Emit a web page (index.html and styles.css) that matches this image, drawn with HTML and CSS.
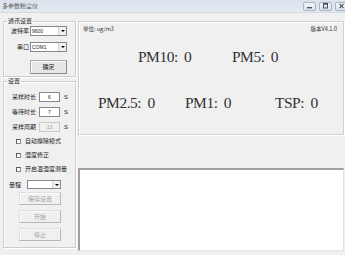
FILE: index.html
```html
<!DOCTYPE html>
<html lang="zh">
<head>
    <meta charset="UTF-8" />
    <title>多参数粉尘仪</title>
    <link rel="stylesheet" href="styles.css">
</head>
<body>
    <div class="window">
        <div class="titlebar">
            <span class="title">多参数粉尘仪</span>
            <div class="win-btns">
                <span class="win-btn">
                    <svg width="7" height="5" viewBox="0 0 7 5"><rect x="1" y="3" width="5" height="1.4" fill="#4a5566"/></svg>
                </span>
                <span class="win-btn">
                    <svg width="7" height="6" viewBox="0 0 7 6"><rect x="1.5" y="0.5" width="4" height="4.5" fill="none" stroke="#4a5566" stroke-width="1"/><rect x="1.5" y="0.5" width="4" height="1.3" fill="#4a5566"/></svg>
                </span>
                <span class="win-btn">
                    <svg width="7" height="6" viewBox="0 0 7 6"><path d="M1.5 0.8 L5.5 5.2 M5.5 0.8 L1.5 5.2" stroke="#4a5566" stroke-width="1.2"/></svg>
                </span>
            </div>
        </div>

        <div class="content">
            <div class="side">
                <fieldset class="group comm">
                    <legend>通讯设置</legend>
                    <div class="field">
                        <label>波特率</label>
                        <div class="combo">9600<span class="drop"></span></div>
                    </div>
                    <div class="field">
                        <label>串口</label>
                        <div class="combo">COM1<span class="drop"></span></div>
                    </div>
                    <button type="button" class="btn btn-ok">确定</button>
                </fieldset>

                <fieldset class="group settings">
                    <legend>设置</legend>
                    <div class="param">
                        <label>采样时长</label>
                        <div class="spin">6</div>
                        <span class="unit">S</span>
                    </div>
                    <div class="param">
                        <label>等待时长</label>
                        <div class="spin">7</div>
                        <span class="unit">S</span>
                    </div>
                    <div class="param">
                        <label>采样周期</label>
                        <div class="spin disabled">13</div>
                        <span class="unit">S</span>
                    </div>

                    <div class="checks">
                        <div class="check"><span class="box"></span>自动擦除模式</div>
                        <div class="check"><span class="box"></span>湿度修正</div>
                        <div class="check"><span class="box"></span>开启温湿度测量</div>
                    </div>

                    <div class="range">
                        <label>量程</label>
                        <div class="combo combo-range"><span class="drop"></span></div>
                    </div>

                    <div class="actions">
                        <button type="button" class="btn" disabled>保存设置</button>
                        <button type="button" class="btn" disabled>开始</button>
                        <button type="button" class="btn" disabled>停止</button>
                    </div>
                </fieldset>
            </div>

            <div class="main">
                <div class="readings">
                    <div class="meta">
                        <span>单位: ug/m3</span>
                        <span>版本V4.1.0</span>
                    </div>
                    <div class="row row-top">
                        <span class="value v-pm10">PM10: 0</span>
                        <span class="value">PM5: 0</span>
                    </div>
                    <div class="row row-bottom">
                        <span class="value v-pm25">PM2.5: 0</span>
                        <span class="value v-pm1">PM1: 0</span>
                        <span class="value">TSP: 0</span>
                    </div>
                </div>
                <div class="log"></div>
            </div>
        </div>
    </div>
</body>
</html>
```

FILE: styles.css
```css
* {
    margin: 0;
    padding: 0;
    box-sizing: border-box;
}

body {
    background-color: #f0f0f0;
    font-family: "Noto Sans CJK SC", "Liberation Sans", sans-serif;
    color: #222;
}

.window {
    width: 345px;
    height: 255px;
    overflow: hidden;
}

.titlebar {
    height: 13px;
    display: flex;
    align-items: center;
    justify-content: space-between;
    padding-left: 2px;
    background: linear-gradient(#d9e2ec, #e4eaf1);
    border-bottom: 1px solid #d3dae3;
}

.title {
    font-size: 6px;
    line-height: 8px;
    color: #5a5a5a;
}

.win-btns {
    display: flex;
    gap: 3px;
    margin-right: -3px;
}

.win-btn {
    width: 13px;
    height: 9px;
    display: flex;
    align-items: center;
    justify-content: center;
    border: 1px solid #a9b4c2;
    border-radius: 2px;
    background: linear-gradient(#f4f6f9, #dde3ea);
}

.content {
    display: flex;
    gap: 2px;
    padding: 4px 1px 0 3px;
}

/* ---------- left column ---------- */

.side {
    width: 73px;
    display: flex;
    flex-direction: column;
}

.group {
    border: 1px solid #cdcdcd;
    box-shadow: inset 1px 1px 0 #fff, 1px 1px 0 #fff;
    min-width: 0;
}

.group legend {
    font-size: 6px;
    line-height: 8px;
    margin-left: 3px;
    padding: 0 1px;
}

.comm {
    height: 60px;
    padding-top: 1px;
}

.field {
    display: flex;
    align-items: center;
    height: 10px;
    margin-bottom: 6px;
}

.field label {
    width: 25px;
    text-align: right;
    font-size: 6px;
    line-height: 8px;
    margin-right: 1px;
}

.combo {
    position: relative;
    width: 37px;
    height: 10px;
    background: #fff;
    border: 1px solid #828790;
    font-family: "Liberation Sans", sans-serif;
    font-size: 5px;
    line-height: 8px;
    padding-left: 1px;
}

.drop {
    position: absolute;
    right: 0;
    top: 0;
    width: 8px;
    height: 8px;
    background: #f0f0f0;
    border-left: 1px solid #d0d0d0;
}

.drop::after {
    content: "";
    position: absolute;
    left: 2px;
    top: 3px;
    border-left: 2px solid transparent;
    border-right: 2px solid transparent;
    border-top: 2px solid #000;
}

.btn {
    display: block;
    font-family: "Noto Sans CJK SC", sans-serif;
    font-size: 6px;
    line-height: 8px;
    color: #222;
    background: #e6e6e6;
    border: 1px solid #a8a8a8;
    border-right-color: #8c8c8c;
    border-bottom-color: #8c8c8c;
    box-shadow: inset 1px 1px 0 #fbfbfb;
}

.btn-ok {
    width: 37px;
    height: 14px;
    margin: 8px 0 0 26px;
}

.btn:disabled {
    color: #a3a3a3;
    background: #f0f0f0;
    border-color: #e0e0e0 #b8b8b8 #b8b8b8 #e0e0e0;
}

.settings {
    height: 171px;
    padding-top: 7px;
}

.param {
    display: flex;
    align-items: center;
    height: 10px;
    margin-bottom: 5px;
}

.param label {
    width: 32px;
    text-align: right;
    font-size: 6px;
    line-height: 8px;
    margin-right: 3px;
}

.spin {
    width: 21px;
    height: 10px;
    background: #fff;
    border: 1px solid #828790;
    font-family: "Liberation Sans", sans-serif;
    font-size: 5px;
    line-height: 8px;
    text-align: center;
}

.spin.disabled {
    background: #f0f0f0;
    border-color: #c8c8c8;
    color: #9a9a9a;
}

.unit {
    font-family: "Liberation Sans", sans-serif;
    font-size: 6px;
    margin-left: 4px;
}

.checks {
    display: flex;
    flex-direction: column;
    gap: 6px;
    margin-top: 4px;
    padding-left: 12px;
}

.check {
    display: flex;
    align-items: center;
    gap: 4px;
    font-size: 6px;
    line-height: 8px;
    height: 8px;
}

.box {
    width: 5px;
    height: 5px;
    border: 1px solid #8a8a8a;
    border-top-color: #5f5f5f;
    border-left-color: #5f5f5f;
    background: #fff;
}

.range {
    display: flex;
    align-items: center;
    height: 9px;
    margin-top: 7px;
    padding-left: 5px;
}

.range label {
    font-size: 6px;
    line-height: 8px;
    width: 18px;
}

.combo-range {
    width: 34px;
    height: 9px;
}

.combo-range .drop {
    height: 7px;
}

.actions {
    display: flex;
    flex-direction: column;
    gap: 5px;
    margin-top: 3px;
    padding-left: 15px;
}

.actions .btn {
    width: 42px;
    height: 13px;
}

/* ---------- right side ---------- */

.main {
    width: 266px;
    display: flex;
    flex-direction: column;
    gap: 33px;
    padding-top: 4px;
}

.readings {
    height: 114px;
    border: 1px solid #d0d0d0;
    box-shadow: inset 1px 1px 0 #fff, 1px 1px 0 #fff;
    padding: 4px 5px 0 4px;
}

.meta {
    display: flex;
    justify-content: space-between;
    font-size: 5.5px;
    line-height: 7px;
    color: #333;
    padding-right: 1px;
}

.row {
    display: flex;
    font-family: "Liberation Serif", serif;
    font-size: 15.5px;
    letter-spacing: -0.5px;
    word-spacing: 3px;
    line-height: 16px;
    color: #333;
}

.row-top {
    margin-top: 16px;
    padding-left: 55px;
}

.row-bottom {
    margin-top: 30px;
    padding-left: 15px;
}

.v-pm10 {
    width: 94px;
}

.v-pm25 {
    width: 87px;
}

.v-pm1 {
    width: 90px;
}

.log {
    height: 83px;
    background: #fff;
    border-top: 2px solid #a0a0a0;
    border-left: 2px solid #a0a0a0;
    border-right: 1px solid #e3e3e3;
    border-bottom: 1px solid #e3e3e3;
}
```
